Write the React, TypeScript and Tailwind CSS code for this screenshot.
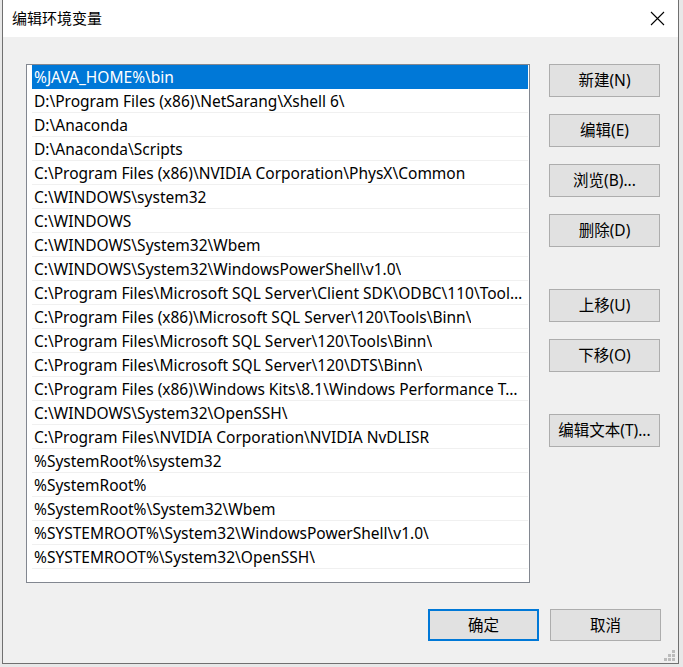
import React from 'react';

const paths = [
  '%JAVA_HOME%\\bin',
  'D:\\Program Files (x86)\\NetSarang\\Xshell 6\\',
  'D:\\Anaconda',
  'D:\\Anaconda\\Scripts',
  'C:\\Program Files (x86)\\NVIDIA Corporation\\PhysX\\Common',
  'C:\\WINDOWS\\system32',
  'C:\\WINDOWS',
  'C:\\WINDOWS\\System32\\Wbem',
  'C:\\WINDOWS\\System32\\WindowsPowerShell\\v1.0\\',
  'C:\\Program Files\\Microsoft SQL Server\\Client SDK\\ODBC\\110\\Tools\\Binn\\',
  'C:\\Program Files (x86)\\Microsoft SQL Server\\120\\Tools\\Binn\\',
  'C:\\Program Files\\Microsoft SQL Server\\120\\Tools\\Binn\\',
  'C:\\Program Files\\Microsoft SQL Server\\120\\DTS\\Binn\\',
  'C:\\Program Files (x86)\\Windows Kits\\8.1\\Windows Performance Toolkit\\',
  'C:\\WINDOWS\\System32\\OpenSSH\\',
  'C:\\Program Files\\NVIDIA Corporation\\NVIDIA NvDLISR',
  '%SystemRoot%\\system32',
  '%SystemRoot%',
  '%SystemRoot%\\System32\\Wbem',
  '%SYSTEMROOT%\\System32\\WindowsPowerShell\\v1.0\\',
  '%SYSTEMROOT%\\System32\\OpenSSH\\',
];

const font = { fontFamily: '"Noto Sans", "Noto Sans CJK SC", sans-serif' };

function Btn({ label, className = '' }: { label: string; className?: string }) {
  return (
    <div
      className={`w-[111px] h-[33px] bg-[#e1e1e1] border border-[#adadad] flex items-center justify-center text-[15.5px] text-black ${className}`}
    >
      {label}
    </div>
  );
}

export default function App() {
  return (
    <div className="w-[683px] h-[667px] bg-[#e8e8e8] overflow-hidden pl-[2px]" style={font}>
      <div className="w-[677px] h-[664px] border-l border-r border-b border-[#707070] bg-[#f0f0f0] flex flex-col relative">
        {/* title bar */}
        <div className="h-[37px] bg-white flex items-center justify-between pl-[9px] pr-[13px]">
          <span className="text-[15px] text-black">编辑环境变量</span>
          <svg width="15" height="15" viewBox="0 0 15 15">
            <path d="M1 1L14 14M14 1L1 14" stroke="#000" strokeWidth="1.1" />
          </svg>
        </div>

        <div className="flex-1 flex pl-[23px] pt-[27px]">
          <div className="w-[504px] h-[519px] border border-[#828790] bg-white pl-[5px] pr-[1px]">
            {paths.map((p, i) => (
              <div
                key={i}
                className={`h-[24px] pl-[2px] pr-[2px] pt-[3px] flex items-center text-[15.5px] whitespace-nowrap overflow-hidden border-b ${
                  i === 0 ? 'bg-[#0078d7] text-white border-[#0078d7]' : 'text-black border-[#f0f0f0]'
                }`}
              >
                <span className="block overflow-hidden text-ellipsis whitespace-nowrap">{p}</span>
              </div>
            ))}
          </div>

          <div className="ml-[19px] flex flex-col">
            <Btn label="新建(N)" />
            <Btn label="编辑(E)" className="mt-[17px]" />
            <Btn label="浏览(B)..." className="mt-[17px]" />
            <Btn label="删除(D)" className="mt-[17px]" />
            <Btn label="上移(U)" className="mt-[42px]" />
            <Btn label="下移(O)" className="mt-[17px]" />
            <Btn label="编辑文本(T)..." className="mt-[42px]" />
          </div>
        </div>

        <div className="flex justify-end gap-[11px] pr-[17px] pb-[22px]">
          <div className="w-[111px] h-[32px] pt-[2px] bg-[#e1e1e1] border-2 border-[#0078d7] flex items-center justify-center text-[15.5px] text-black">
            确定
          </div>
          <div className="w-[111px] h-[32px] pt-[2px] bg-[#e1e1e1] border border-[#adadad] flex items-center justify-center text-[15.5px] text-black">
            取消
          </div>
        </div>

        {/* resize grip */}
        <svg className="absolute right-[2px] bottom-[1px]" width="12" height="12" viewBox="0 0 12 12">
          <rect x="8" y="0" width="3" height="3" fill="#bcbcbc" />
          <rect x="4" y="4" width="3" height="3" fill="#bcbcbc" />
          <rect x="8" y="4" width="3" height="3" fill="#bcbcbc" />
          <rect x="0" y="8" width="3" height="3" fill="#bcbcbc" />
          <rect x="4" y="8" width="3" height="3" fill="#bcbcbc" />
          <rect x="8" y="8" width="3" height="3" fill="#bcbcbc" />
        </svg>
      </div>
    </div>
  );
}
